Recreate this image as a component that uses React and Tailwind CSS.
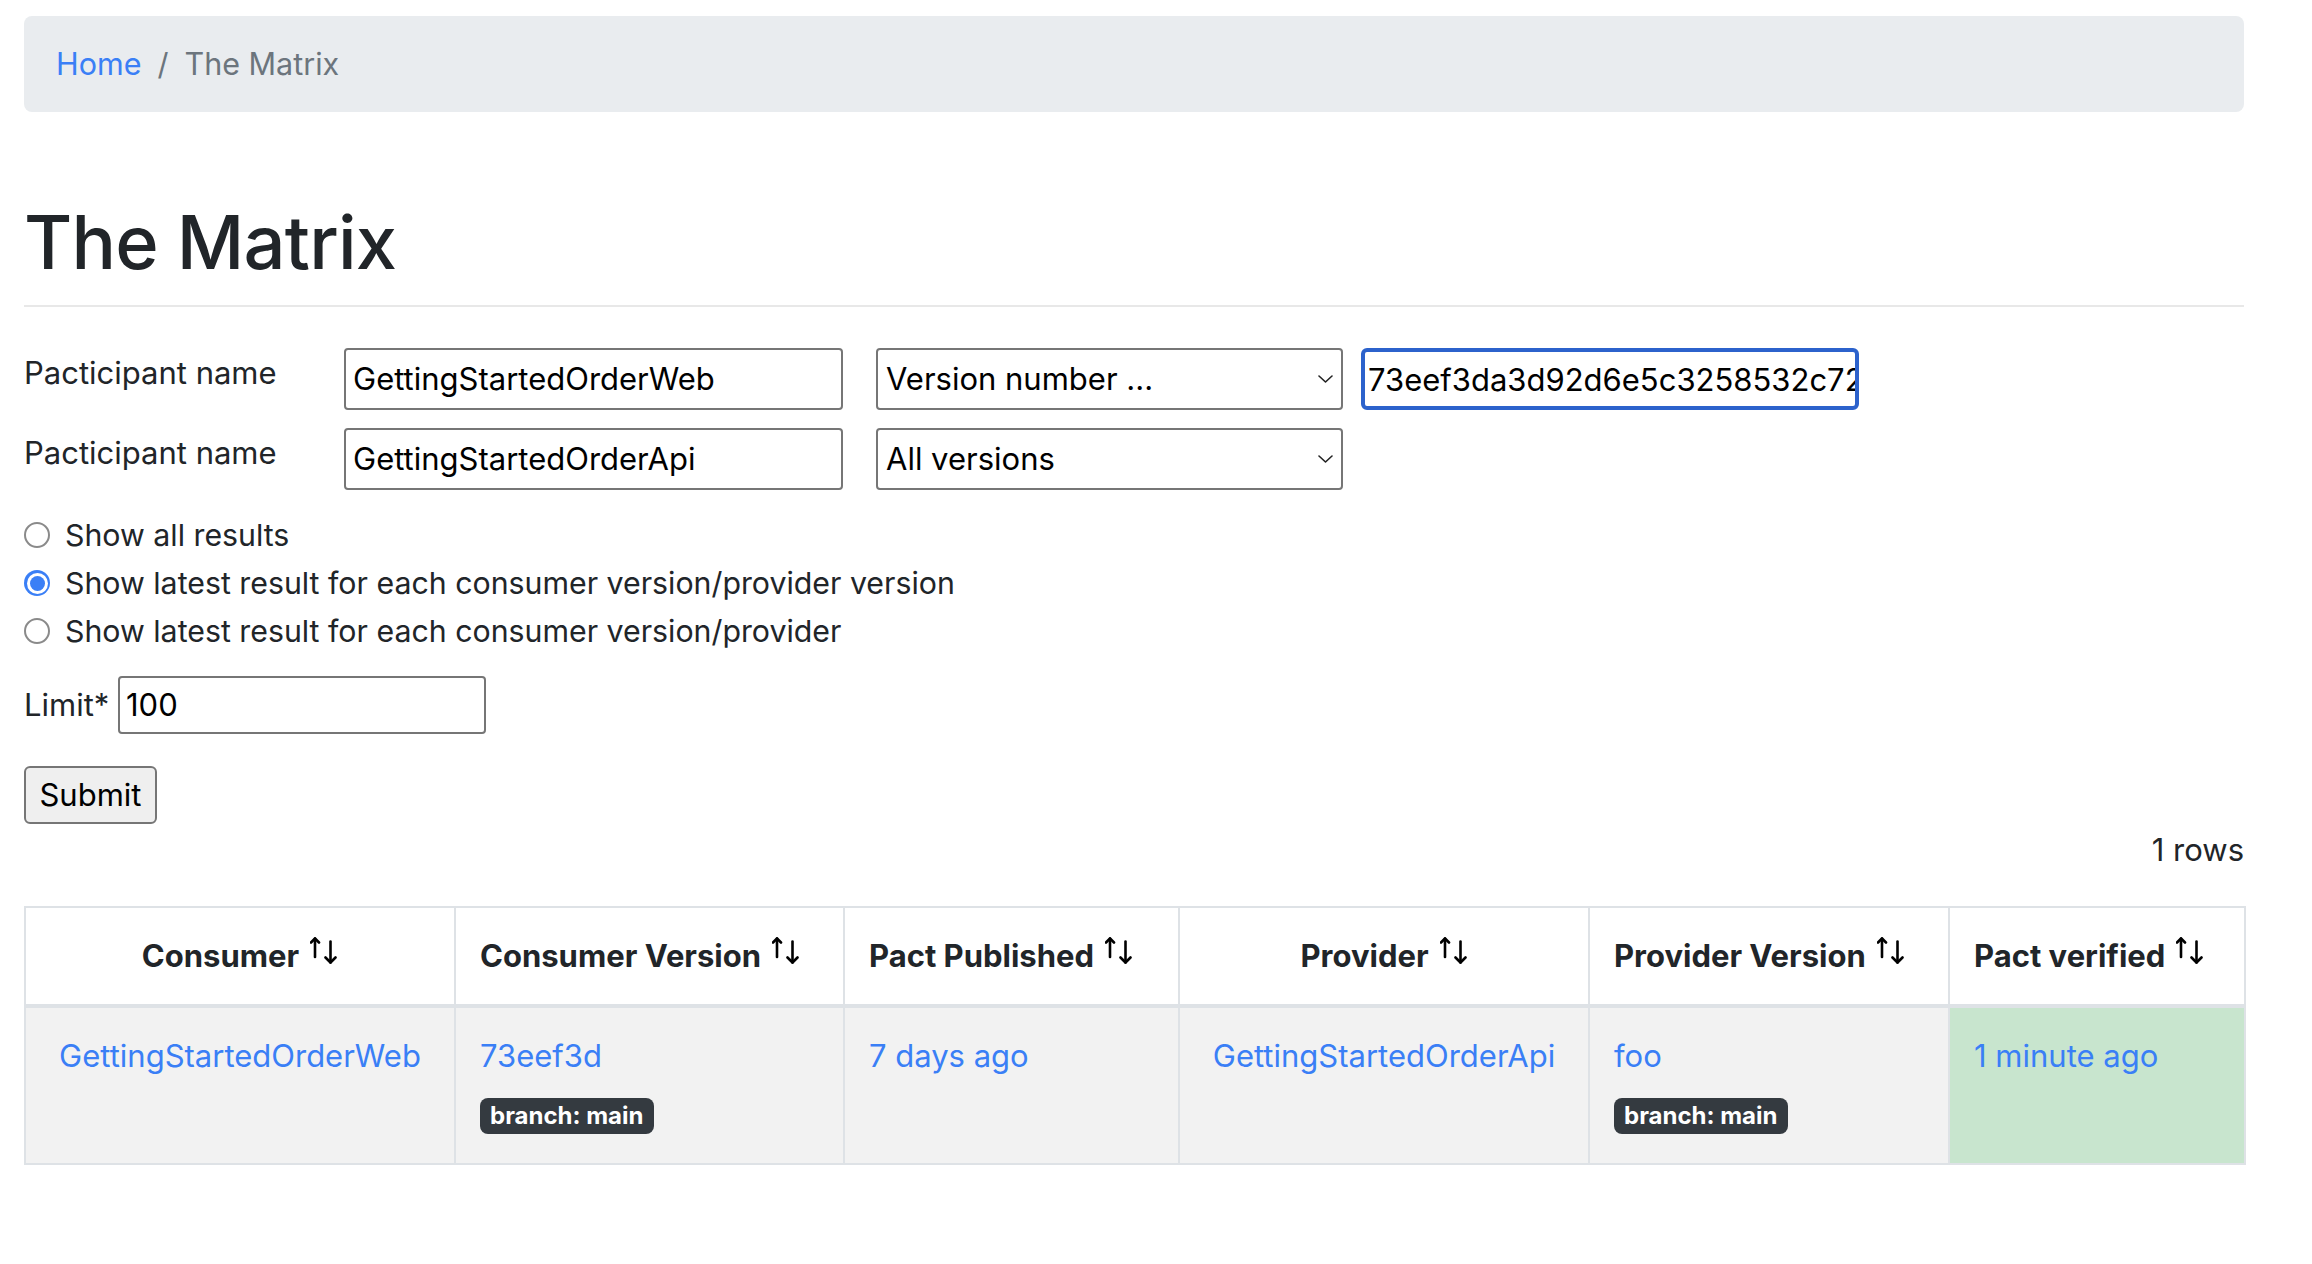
import React from "react";

const LINK = "text-[#3a7ff6] no-underline";

function SortIcon() {
  return (
    <svg width="28" height="27" viewBox="0 0 28 27" className="mt-[5px] ml-[11px] shrink-0" fill="none" stroke="#000" strokeWidth="2.6" strokeLinecap="round" strokeLinejoin="round">
      <path d="M5 1.5 V20" />
      <path d="M1 5.5 L5 1.5 L9 5.5" />
      <path d="M20.5 4.5 V25.5" />
      <path d="M15.5 20.5 L20.5 25.5 L25.5 20.5" />
    </svg>
  );
}

function Chevron() {
  return (
    <svg width="15" height="8" viewBox="0 0 15 8" fill="none" stroke="#222" strokeWidth="1.6" strokeLinecap="round" strokeLinejoin="round" className="shrink-0">
      <path d="M1 1 L7.5 7 L14 1" />
    </svg>
  );
}

function Radio({ checked }) {
  if (checked) {
    return (
      <span className="w-[26px] h-[26px] rounded-full bg-[#3a7ff6] flex items-center justify-center shrink-0">
        <span className="w-[21px] h-[21px] rounded-full bg-white flex items-center justify-center">
          <span className="w-[15px] h-[15px] rounded-full bg-[#3a7ff6]" />
        </span>
      </span>
    );
  }
  return <span className="w-[26px] h-[26px] rounded-full border-2 border-[#8a8a8a] bg-white shrink-0" />;
}

function Badge() {
  return (
    <span className="inline-block mt-[18px] bg-[#343a40] text-white font-bold text-[24px] leading-[24px] px-[10px] py-[6px] rounded-[8px]">
      branch: main
    </span>
  );
}

function Th({ children, center, w }) {
  return (
    <th className={`${w} border-2 border-b-4 border-[#dee2e6] bg-white px-[24px] py-[24px] font-bold text-[31px] leading-[48px] text-[#212529] align-top`}>
      <div className={`flex items-start ${center ? "justify-center" : "justify-start"}`}>
        <span>{children}</span>
        <SortIcon />
      </div>
    </th>
  );
}

function Td({ children, center, green }) {
  return (
    <td className={`border-2 border-[#dee2e6] ${green ? "bg-[#c8e5ce]" : "bg-[#f2f2f2]"} px-[24px] pt-[24px] pb-[26px] align-top text-[31px] leading-[48px] ${center ? "text-center" : "text-left"}`}>
      {children}
    </td>
  );
}

export default function App() {
  return (
    <div className="min-h-screen bg-white text-[#212529] pt-[16px]" style={{ fontFamily: "Inter, 'Noto Sans', sans-serif" }}>
      <div className="ml-[24px] w-[2220px]">
        {/* Breadcrumb */}
        <nav className="h-[96px] bg-[#e9ecef] rounded-[8px] px-[32px] flex items-center text-[30.5px] leading-[48px]">
          <a href="#" className={LINK}>Home</a>
          <span className="px-[16px] text-[#6c757d]">/</span>
          <span className="text-[#6c757d]">The Matrix</span>
        </nav>

        {/* Title */}
        <h1 className="mt-[82px] text-[74px] leading-[96px] font-medium tracking-[-0.8px]">The Matrix</h1>
        <div className="mt-[15px] h-[2px] bg-[#e8e8e8]" />

        {/* Form rows */}
        <div className="mt-[41px] flex items-start">
          <label className="w-[320px] pt-[1px] text-[31px] leading-[48px]">Pacticipant name</label>
          <div className="w-[499px] h-[62px] border-2 border-[#767676] rounded-[4px] pl-[7px] flex items-center text-[31px] text-black whitespace-nowrap">GettingStartedOrderWeb</div>
          <div className="ml-[33px] w-[467px] h-[62px] border-2 border-[#767676] rounded-[4px] pl-[8px] pr-[8px] flex items-center justify-between text-[31px] text-black">
            <span>Version number ...</span>
            <Chevron />
          </div>
          <input
            readOnly
            value="73eef3da3d92d6e5c3258532c72a1b4e9d0f"
            className="ml-[18px] w-[498px] h-[62px] border-[4px] border-[#2c62cc] rounded-[6px] pl-[3px] text-[31px] text-black outline-none bg-white"
            style={{ fontFamily: "Inter, 'Noto Sans', sans-serif" }}
          />
        </div>
        <div className="mt-[18px] flex items-start">
          <label className="w-[320px] pt-[1px] text-[31px] leading-[48px]">Pacticipant name</label>
          <div className="w-[499px] h-[62px] border-2 border-[#767676] rounded-[4px] pl-[7px] flex items-center text-[31px] text-black">GettingStartedOrderApi</div>
          <div className="ml-[33px] w-[467px] h-[62px] border-2 border-[#767676] rounded-[4px] pl-[8px] pr-[8px] flex items-center justify-between text-[31px] text-black">
            <span>All versions</span>
            <Chevron />
          </div>
        </div>

        {/* Radios */}
        <div className="mt-[21px] text-[30.3px] leading-[48px]">
          <div className="flex items-center gap-[15px]"><Radio /><span>Show all results</span></div>
          <div className="flex items-center gap-[15px]"><Radio checked /><span>Show latest result for each consumer version/provider version</span></div>
          <div className="flex items-center gap-[15px]"><Radio /><span>Show latest result for each consumer version/provider</span></div>
        </div>

        {/* Limit */}
        <div className="mt-[21px] flex items-center text-[31px]">
          <span className="w-[94px]">Limit*</span>
          <div className="w-[368px] h-[58px] border-2 border-[#767676] rounded-[4px] pl-[6px] flex items-center text-black">100</div>
        </div>

        {/* Submit */}
        <button className="mt-[32px] w-[133px] h-[58px] bg-[#efefef] border-2 border-[#767676] rounded-[6px] text-[31px] text-black flex items-center justify-center">Submit</button>

        <div className="mt-[2px] text-right text-[31px] leading-[48px]">1 rows</div>

        {/* Table */}
        <table className="mt-[32px] w-[2220px] table-fixed border-collapse border-2 border-[#dee2e6]">
          <thead>
            <tr>
              <Th center w="w-[430px]">Consumer</Th>
              <Th w="w-[389px]">Consumer Version</Th>
              <Th w="w-[335px]">Pact Published</Th>
              <Th center w="w-[410px]">Provider</Th>
              <Th w="w-[360px]">Provider Version</Th>
              <Th w="w-[296px]">Pact verified</Th>
            </tr>
          </thead>
          <tbody>
            <tr>
              <Td center><a href="#" className={LINK}>GettingStartedOrderWeb</a></Td>
              <Td>
                <div><a href="#" className={LINK}>73eef3d</a></div>
                <Badge />
              </Td>
              <Td><a href="#" className={LINK}>7 days ago</a></Td>
              <Td center><a href="#" className={LINK}>GettingStartedOrderApi</a></Td>
              <Td>
                <div><a href="#" className={LINK}>foo</a></div>
                <Badge />
              </Td>
              <Td green><a href="#" className={LINK}>1 minute ago</a></Td>
            </tr>
          </tbody>
        </table>
      </div>
    </div>
  );
}
